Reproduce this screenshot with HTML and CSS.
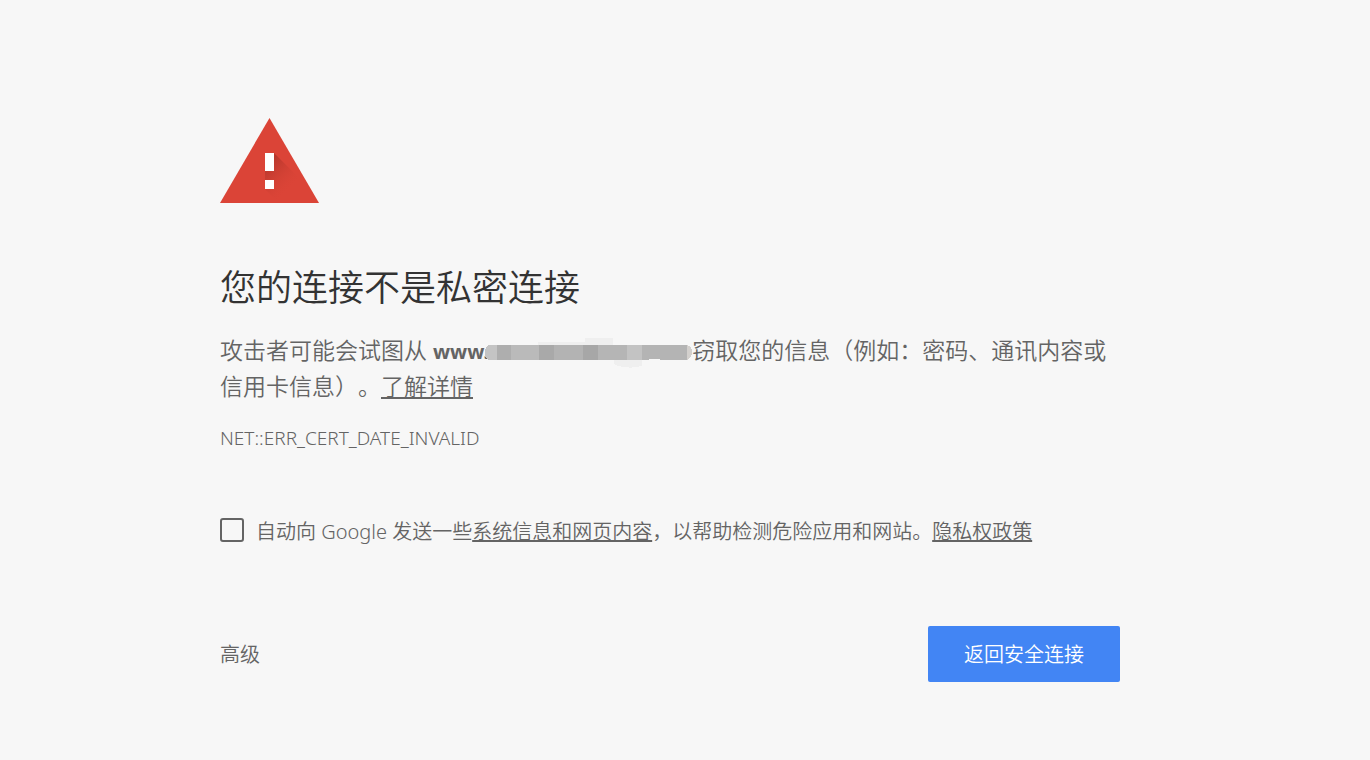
FILE: index.html
```html
<!DOCTYPE html>
<html lang="zh-CN">
<head>
    <meta charset="UTF-8">
    <meta name="viewport" content="width=device-width, initial-scale=1.0">
    <title>隐私设置错误</title>
    <link rel="stylesheet" href="styles.css">
</head>
<body>
    <main class="interstitial">
        <svg class="icon" viewBox="0 0 100 86" aria-hidden="true">
            <defs>
                <linearGradient id="shade" gradientUnits="userSpaceOnUse" x1="48" y1="46" x2="72" y2="70">
                    <stop offset="0" stop-color="#a93228" stop-opacity="0.7"/>
                    <stop offset="1" stop-color="#db4437" stop-opacity="0"/>
                </linearGradient>
            </defs>
            <path fill="#db4437" d="M49.500 0 99 85H0z"/>
            <path fill="url(#shade)" d="M54 35 83 64V85H59L45 71V53h9z"/>
            <path fill="#fff" d="M45 35h9v18h-9zM45 62h9v9h-9z"/>
        </svg>

        <h1>您的连接不是私密连接</h1>
        <p class="message">攻击者可能会试图从 <strong>www.</strong><svg class="masked" viewBox="0 0 212 30" preserveAspectRatio="none" shape-rendering="crispEdges" aria-hidden="true">
                <path fill="#efefef" d="M55 4h48V0h28v7H55zM132 22h29v6q-15 4-29-2z"/>
                <path fill="#c4c4c4" d="M4 7h9v15H4q-7-7 0-15z"/>
                <path fill="#aeaeae" d="M13 7h15v15H13z"/>
                <path fill="#bababa" d="M28 7h28v15H28z"/>
                <path fill="#a9a9a9" d="M56 7h15v15H56z"/>
                <path fill="#b3b3b3" d="M71 7h30v15H71z"/>
                <path fill="#a7a7a7" d="M101 7h15v15h-15z"/>
                <path fill="#b5b5b5" d="M116 7h30v15h-30z"/>
                <path fill="#c3c3c3" d="M146 7h15v15h-15z"/>
                <path fill="#b4b4b4" d="M161 7h46v15h-26q-7-3-14 0h-6z"/>
                <path fill="#d3d0cd" d="M207 7q5 1 5 7t-5 8z"/>
            </svg>窃取您的信息（例如：密码、通讯内容或信用卡信息）。<a href="#">了解详情</a></p>
        <p class="error-code">NET::ERR_CERT_DATE_INVALID</p>

        <div class="opt-in">
            <input type="checkbox" id="report">
            <label for="report">自动向 Google 发送一些<a href="#">系统信息和网页内容</a>，以帮助检测危险应用和网站。<a href="#">隐私权政策</a></label>
        </div>

        <div class="nav">
            <button type="button" class="details">高级</button>
            <button type="button" class="primary">返回安全连接</button>
        </div>
    </main>
</body>
</html>
```

FILE: styles.css
```css
body {
    margin: 0;
    padding: 118px 30px 78px 0;
    background: #f7f7f7;
    color: #646464;
    font-family: "Noto Sans", "Noto Sans CJK SC", sans-serif;
    font-size: 20px;
    font-weight: 350;
    text-spacing-trim: space-all;
}

.interstitial {
    max-width: 900px;
    margin: 0 auto;
}

.icon {
    display: block;
    width: 100px;
    height: 86px;
}

h1 {
    margin: 60px 0 20px;
    color: #333;
    font-size: 36px;
    font-weight: 350;
    line-height: 48px;
}

p { margin: 0; }

a {
    color: inherit;
    text-decoration: underline;
}

.message {
    font-size: 23px;
    line-height: 36px;
}

.message strong {
    font-size: 20px;
    font-weight: 700;
    line-height: 1;
}

.masked {
    width: 208px;
    height: 30px;
    vertical-align: -9px;
    margin: -6px 0 0 -5px;
}

.error-code {
    margin-top: 20px;
    font-size: 19px;
    line-height: 28px;
}

.opt-in {
    display: flex;
    align-items: center;
    gap: 12px;
    margin-top: 62px;
    line-height: 28px;
}

.opt-in label { padding-top: 4px; }

.opt-in input {
    appearance: none;
    flex: none;
    width: 24px;
    height: 24px;
    margin: 0;
    border: 2px solid #646464;
    border-radius: 3px;
}

.opt-in input:checked { background: #646464; }

.nav {
    display: flex;
    align-items: center;
    justify-content: space-between;
    margin-top: 80px;
}

button {
    border: none;
    font: inherit;
    line-height: 28px;
    cursor: pointer;
}

.details {
    padding: 2px 0 0;
    background: none;
    color: #646464;
}

.primary {
    padding: 15px 36px 13px;
    border-radius: 2px;
    background: #4285f4;
    color: #fff;
}
```
